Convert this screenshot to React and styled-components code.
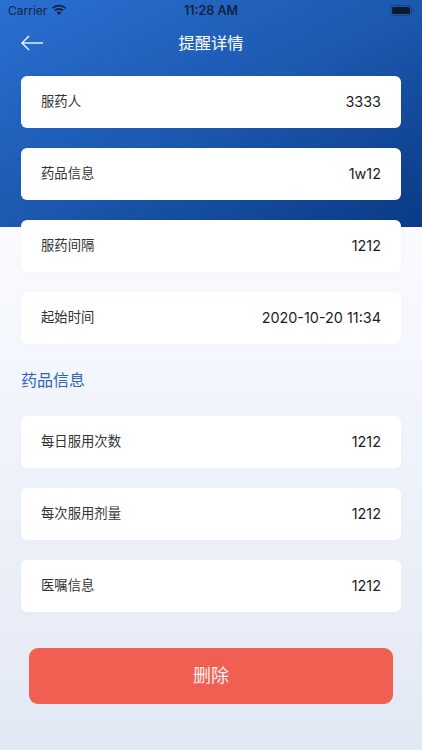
import React from "react";
import styled, { createGlobalStyle } from "styled-components";

const Global = createGlobalStyle`
  html, body { margin: 0; padding: 0; }
  body { font-family: Inter, "Noto Sans CJK SC", sans-serif; }
`;

const Page = styled.div`
  width: 422px;
  height: 750px;
  overflow: hidden;
  display: flex;
  flex-direction: column;
  background:
    linear-gradient(to bottom right, #2a70d2 0%, #1c59b0 50%, #0a3a84 100%) top / 100% 227px no-repeat,
    linear-gradient(180deg, #f9fbff 227px, #e2e8f4 100%);
`;

const StatusBar = styled.div`
  height: 20px;
  padding: 0 8px;
  display: grid;
  grid-template-columns: 1fr auto 1fr;
  align-items: center;
  color: #10233f;
  font-size: 12px;
`;

const Carrier = styled.div`
  display: flex;
  align-items: center;
  gap: 4px;
`;

const Clock = styled.div`
  font-weight: 600;
  font-size: 12.5px;
`;

const BatteryWrap = styled.div`
  justify-self: end;
  display: flex;
`;

const NavBar = styled.div`
  height: 44px;
  margin-top: 1px;
  padding: 0 21px;
  display: grid;
  grid-template-columns: 1fr auto 1fr;
  align-items: center;
`;

const Title = styled.div`
  color: #fff;
  font-size: 16.3px;
  line-height: 22px;
  margin-bottom: 2px;
  font-family: "Noto Sans CJK SC", sans-serif;
`;

const Content = styled.div`
  margin-top: 11px;
  padding: 0 21px;
  display: flex;
  flex-direction: column;
  gap: 20px;
`;

const Row = styled.div`
  box-sizing: border-box;
  height: 52px;
  padding: 0 20px 1px;
  background: #fff;
  border-radius: 6px;
  display: flex;
  align-items: center;
  justify-content: space-between;
  box-shadow: 0 1px 6px rgba(80, 110, 170, 0.02);
`;

const Label = styled.span`
  color: #333;
  font-size: 13.34px;
  line-height: 20px;
  margin-bottom: 1px;
  font-family: "Noto Sans CJK SC", sans-serif;
`;

const Value = styled.span`
  color: #1c1c1e;
  font-size: 14.4px;
  line-height: 20px;
`;

const SectionTitle = styled.div`
  color: #2f65b4;
  font-size: 16px;
  line-height: 24px;
  font-family: "Noto Sans CJK SC", sans-serif;
  margin-top: 3px;
  margin-bottom: 5px;
`;

const Delete = styled.button`
  margin: 16px 8px 0;
  height: 56px;
  padding: 0 0 4px;
  border: 0;
  border-radius: 9px;
  background: #f05f52;
  color: #fdf0ee;
  font-size: 18px;
  font-family: "Noto Sans CJK SC", sans-serif;
`;

const Wifi = () => (
  <svg width="16" height="12" viewBox="0 0 16 12" fill="#10233f">
    <path d="M8 2.600c2.300 0 4.300.900 5.800 2.300l1.200-1.300C13.200 1.800 10.700.700 8 .700S2.800 1.800 1 3.600l1.200 1.300C3.700 3.500 5.700 2.600 8 2.600z" />
    <path d="M8 5.900c1.300 0 2.500.500 3.400 1.300l1.200-1.300C11.400 4.800 9.800 4.100 8 4.100s-3.400.700-4.600 1.800l1.200 1.300c.900-.800 2.100-1.300 3.400-1.300z" />
    <path d="M8 7.600c-.900 0-1.700.300-2.300.900L8 11l2.300-2.500c-.600-.600-1.400-.900-2.300-.900z" />
  </svg>
);

const Battery = () => (
  <svg width="24" height="11" viewBox="0 0 24 11">
    <rect x="0.500" y="0.500" width="21" height="10" rx="2.800" fill="none" stroke="#10233f" strokeOpacity="0.4" />
    <rect x="2" y="2" width="18" height="7" rx="1.600" fill="#0a1830" />
    <path d="M22.800 3.800c.700.300 1 .900 1 1.700s-.300 1.400-1 1.700z" fill="#10233f" fillOpacity="0.5" />
  </svg>
);

const BackArrow = () => (
  <svg width="22" height="16" viewBox="0 0 22 16" fill="none" stroke="#fff" strokeWidth="1.300">
    <path d="M0.800 8H22" />
    <path d="M8 1L1 8l7 7" />
  </svg>
);

const topRows = [
  ["服药人", "3333"],
  ["药品信息", "1w12"],
  ["服药间隔", "1212"],
  ["起始时间", "2020-10-20 11:34"],
];
const drugRows = [
  ["每日服用次数", "1212"],
  ["每次服用剂量", "1212"],
  ["医嘱信息", "1212"],
];

export default function App() {
  return (
    <Page>
      <Global />
      <StatusBar>
        <Carrier>Carrier <Wifi /></Carrier>
        <Clock>11:28 AM</Clock>
        <BatteryWrap><Battery /></BatteryWrap>
      </StatusBar>
      <NavBar>
        <BackArrow />
        <Title>提醒详情</Title>
      </NavBar>
      <Content>
        {topRows.map(([l, v]) => (
          <Row key={l}><Label>{l}</Label><Value>{v}</Value></Row>
        ))}
        <SectionTitle>药品信息</SectionTitle>
        {drugRows.map(([l, v]) => (
          <Row key={l}><Label>{l}</Label><Value>{v}</Value></Row>
        ))}
        <Delete>删除</Delete>
      </Content>
    </Page>
  );
}
